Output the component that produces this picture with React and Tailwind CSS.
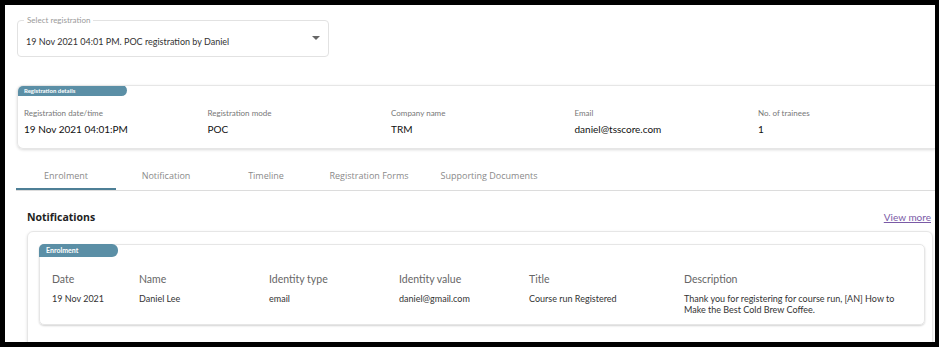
import React from 'react';

const details = [
  { label: 'Registration date/time', value: '19 Nov 2021 04:01:PM' },
  { label: 'Registration mode', value: 'POC' },
  { label: 'Company name', value: 'TRM' },
  { label: 'Email', value: 'daniel@tsscore.com' },
  { label: 'No. of trainees', value: '1' },
];

const tabs = [
  { name: 'Enrolment', w: 'w-[100px]' },
  { name: 'Notification', w: 'w-[100px]' },
  { name: 'Timeline', w: 'w-[100px]' },
  { name: 'Registration Forms', w: 'w-[106px]' },
  { name: 'Supporting Documents', w: 'w-[134px]' },
];

const columns = [
  { title: 'Date', value: '19 Nov 2021', w: 'w-[87px]' },
  { title: 'Name', value: 'Daniel Lee', w: 'w-[130px]' },
  { title: 'Identity type', value: 'email', w: 'w-[130px]' },
  { title: 'Identity value', value: 'daniel@gmail.com', w: 'w-[130px]' },
  { title: 'Title', value: 'Course run Registered', w: 'w-[155px]' },
  {
    title: 'Description',
    value: 'Thank you for registering for course run, [AN] How to Make the Best Cold Brew Coffee.',
    w: 'w-[232px]',
  },
];

const Badge = ({ children, className }) => (
  <div
    className={`bg-[#5b8fa6] text-white font-bold rounded-tl-[5px] rounded-r-[6px] pl-[7px] flex items-center ${className}`}
  >
    {children}
  </div>
);

export default function App() {
  return (
    <div className="w-[939px] h-[347px] bg-black pt-[5px] pl-[5px] pr-[4px] pb-[5px] overflow-hidden font-['Lato',sans-serif]">
      <div className="bg-white h-full overflow-hidden">
        {/* Select */}
        <div className="pt-[15px] pl-[12px]">
          <div className="relative w-[312px] h-[37px] border border-[#e2e2e2] rounded-[4px]">
            <span className="absolute -top-[6px] left-[6px] bg-white px-[3px] text-[8px] leading-[10px] text-[#9a9a9a]">
              Select registration
            </span>
            <div className="flex items-center justify-between h-full pl-[8px] pr-[8px] pt-[6px]">
              <span className="text-[9px] text-[#333]">19 Nov 2021 04:01 PM. POC registration by Daniel</span>
              <svg width="8" height="5" viewBox="0 0 8 5" className="mb-[6px]">
                <path d="M0 0 L8 0 L4 4 Z" fill="#666" />
              </svg>
            </div>
          </div>
        </div>

        {/* Registration details */}
        <div className="mt-[28px] ml-[12px] h-[64px] border border-[#e6e6e6] border-r-0 rounded-l-[6px] shadow-[0_1px_3px_rgba(0,0,0,0.15)] overflow-hidden">
          <Badge className="w-[110px] h-[11px] text-[6px] -mt-px -ml-px">Registration details</Badge>
          <div className="flex pl-[6px] pt-[12px]">
            {details.map((d) => (
              <div key={d.label} className="w-[183.5px] shrink-0">
                <div className="text-[8px] leading-[10px] text-[#777]">{d.label}</div>
                <div className="text-[10px] leading-[12px] mt-[5px] text-[#111]">{d.value}</div>
              </div>
            ))}
          </div>
        </div>

        {/* Tabs */}
        <div className="mt-[20px] ml-[11px] flex border-b border-[#dcdcdc] font-['Open_Sans',sans-serif]">
          {tabs.map((t, i) => (
            <div
              key={t.name}
              className={`${t.w} h-[21px] flex items-start justify-center text-[9px] text-[#8a8a8a] ${
                i === 0 ? 'border-b-2 border-[#4d7f96] -mb-px' : ''
              }`}
            >
              {t.name}
            </div>
          ))}
        </div>

        {/* Notifications */}
        <div className="flex items-center justify-between mt-[19px] pl-[22px] pr-[4px]">
          <h2 className="text-[10.5px] font-bold text-[#222] font-['Open_Sans',sans-serif]">Notifications</h2>
          <a className="text-[10px] text-[#7a5aa6] underline">View more</a>
        </div>

        <div className="mt-[5px] ml-[22px] mr-[2px] h-[120px] border border-[#e6e6e6] rounded-[6px] shadow-[0_1px_3px_rgba(0,0,0,0.12)] pt-[12px] pl-[11px] pr-[7px]">
          <div className="h-[81px] border border-[#e6e6e6] rounded-[5px] shadow-[0_1px_2px_rgba(0,0,0,0.18)]">
            <Badge className="w-[79px] h-[13px] text-[7px] -mt-px -ml-px">Enrolment</Badge>
            <div className="flex pl-[12px] pt-[16px]">
              {columns.map((c) => (
                <div key={c.title} className={`${c.w} shrink-0`}>
                  <div className="text-[10.5px] leading-[12px] text-[#666]">{c.title}</div>
                  <div className="text-[9px] leading-[11px] mt-[8px] text-[#333]">{c.value}</div>
                </div>
              ))}
            </div>
          </div>
        </div>
      </div>
    </div>
  );
}
